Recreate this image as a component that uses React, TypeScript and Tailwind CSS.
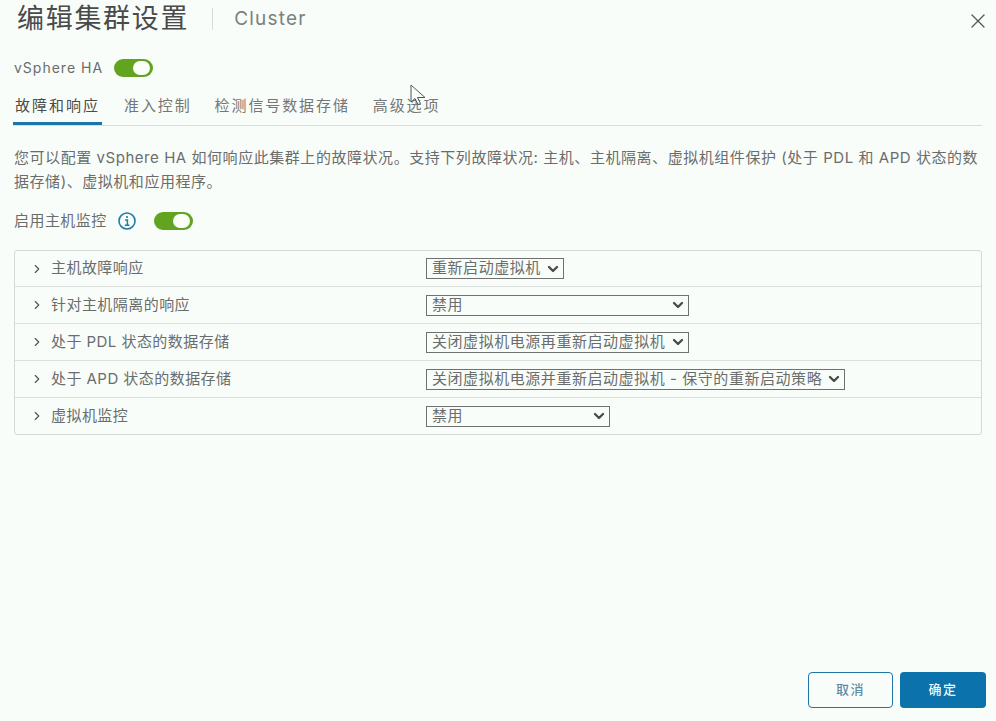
import { ChevronDown, ChevronRight, X } from 'lucide-react'

const rows = [
  { label: '主机故障响应', value: '重新启动虚拟机', width: 'w-[138px]' },
  { label: '针对主机隔离的响应', value: '禁用', width: 'w-[263px]' },
  { label: '处于 PDL 状态的数据存储', value: '关闭虚拟机电源再重新启动虚拟机', width: 'w-[263px]' },
  { label: '处于 APD 状态的数据存储', value: '关闭虚拟机电源并重新启动虚拟机 - 保守的重新启动策略', width: 'w-[419px]' },
  { label: '虚拟机监控', value: '禁用', width: 'w-[184px]' },
]

const tabs = ['准入控制', '检测信号数据存储', '高级选项']

function Toggle() {
  return (
    <div className="flex h-[18px] w-[39px] items-center justify-end rounded-full bg-[#62a420] pr-[3px]">
      <div className="h-[14px] w-[17px] rounded-full bg-[#fafdf8]" />
    </div>
  )
}

export default function App() {
  return (
    <div className="relative flex h-[721px] w-full flex-col overflow-hidden bg-[#f9fdfa] pl-[13px] pr-[14px] font-['Inter','Noto_Sans_CJK_SC',sans-serif] text-[#6a6d6c]">
      {/* Header */}
      <div className="flex h-[38px] items-center pl-[4px]">
        <h1 className="text-[27px] font-normal tracking-[1.7px] whitespace-nowrap text-[#4a4a4a]">编辑集群设置</h1>
        <div className="mr-[21px] ml-[23px] h-[22px] w-px bg-[#d8dcd9]" />
        <span className="text-[19px] tracking-[1.2px] text-[#7c7f7e]">Cluster</span>
        <X className="mt-[3px] mr-[-8px] ml-auto h-[24px] w-[24px] text-[#565656]" strokeWidth={1.3} />
      </div>

      {/* vSphere HA */}
      <div className="mt-[21px] flex h-[18px] items-center pl-px">
        <span className="w-[100px] pb-[2px] text-[14px] tracking-[1px] whitespace-nowrap">vSphere HA</span>
        <Toggle />
      </div>

      {/* Tabs */}
      <div className="mt-[13px] flex h-[36px] border-b border-[#d9dcda]">
        <div className="flex h-[35px] w-[89px] items-center justify-center border-b-[3px] border-[#1a75a8] text-[15px] tracking-[2px] whitespace-nowrap text-[#4a4c4b]">
          故障和响应
        </div>
        <div className="flex gap-[23px] pl-[22px]">
          {tabs.map((t) => (
            <span key={t} className="flex h-[32px] items-center text-[15px] tracking-[1.9px] whitespace-nowrap text-[#747776]">
              {t}
            </span>
          ))}
        </div>
      </div>

      {/* Description */}
      <p className="mt-[20px] mb-[1px] pl-px text-[15px] leading-[24px] tracking-[0.55px] whitespace-nowrap">
        您可以配置 vSphere HA 如何响应此集群上的故障状况。支持下列故障状况: 主机、主机隔离、虚拟机组件保护 (处于 PDL 和 APD 状态的数
        <br />
        据存储)、虚拟机和应用程序。
      </p>

      {/* Host monitoring */}
      <div className="mt-[17px] flex h-[18px] items-center pl-px">
        <span className="w-[104px] text-[15px] tracking-[0.45px] whitespace-nowrap">启用主机监控</span>
        <svg viewBox="0 0 18 18" className="h-[18px] w-[18px] text-[#1f7bad]" fill="none" stroke="currentColor">
          <circle cx="9" cy="9" r="8" strokeWidth="1.6" />
          <circle cx="9" cy="5" r="1.1" fill="currentColor" stroke="none" />
          <path d="M7 8h2.4v5M6.8 13.2h4.6" strokeWidth="1.5" />
        </svg>
        <div className="ml-[18px]">
          <Toggle />
        </div>
      </div>

      {/* Response table */}
      <div className="mt-[20px] ml-px rounded-[3px] border border-[#d5d9d7]">
        {rows.map((r, i) => (
          <div
            key={r.label}
            className={`flex items-center ${i > 0 ? 'h-[37px] border-t border-[#dcdfdd]' : 'h-[35px]'}`}
          >
            <ChevronRight className="ml-[15px] h-[14px] w-[14px] text-[#565656]" strokeWidth={2} />
            <span className="ml-[7px] w-[375px] text-[15px] tracking-[0.45px] whitespace-nowrap">{r.label}</span>
            <div className={`flex h-[21px] ${r.width} items-center justify-between border border-[#707070] pr-[2px] pl-[5px] text-[15px] tracking-[0.55px] whitespace-nowrap`}>
              <span>{r.value}</span>
              <ChevronDown className="h-[16px] w-[16px] text-[#4a4a4a]" strokeWidth={3.5} />
            </div>
          </div>
        ))}
      </div>

      {/* Footer */}
      <div className="mt-auto mr-[-4px] mb-[13px] flex justify-end gap-[7px]">
        <button className="flex h-[36px] w-[85px] items-center justify-center rounded-[4px] border border-[#1f75a8] text-[13px] font-medium tracking-[1.5px] text-[#5f8ba5]">
          取消
        </button>
        <button className="flex h-[36px] w-[86px] items-center justify-center rounded-[4px] bg-[#0b72ab] text-[13px] font-medium tracking-[1.5px] text-[#f2f7f8]">
          确定
        </button>
      </div>

      {/* Mouse pointer in the capture */}
      <svg viewBox="0 0 16 24" className="absolute top-[84px] left-[410px] h-[24px] w-[16px]" fill="#f9fdfa" stroke="#555" strokeWidth="1">
        <path d="M1 1v17l4-3.5 3 6 2.5-1-3-6H15z" />
      </svg>
    </div>
  )
}
